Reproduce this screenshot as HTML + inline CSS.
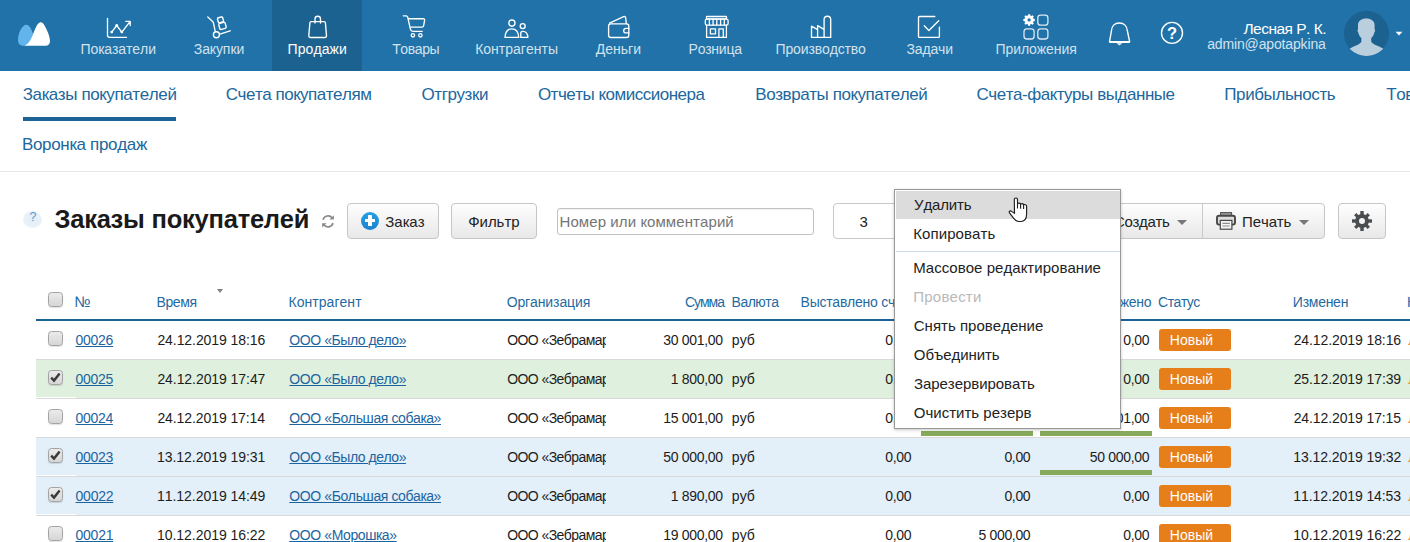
<!DOCTYPE html>
<html lang="ru">
<head>
<meta charset="utf-8">
<title>Заказы покупателей</title>
<style>
*{box-sizing:border-box;margin:0;padding:0}
html,body{width:1410px;height:542px;overflow:hidden;background:#fff}
body{font-family:"Liberation Sans",sans-serif;position:relative}
.a{position:absolute}
.t{position:absolute;white-space:nowrap;font-kerning:none}
.cb{position:absolute;width:15px;height:15px;border:1px solid #a3a3a3;border-radius:3.5px;background:linear-gradient(#ebebeb,#d6d6d6);box-shadow:0 1px 1px rgba(0,0,0,.12)}
.cb svg{position:absolute;left:-1px;top:-1px}
.btn{position:absolute;top:203px;height:36px;border:1px solid #c6c6c6;border-radius:4px;background:linear-gradient(#fefefe,#e8e8e8)}
svg{display:block;overflow:visible}
</style>
</head>
<body>
<div class="a" style="left:0px;top:0px;width:1410px;height:71px;background:#2072a8;"></div>
<div class="a" style="left:272px;top:0px;width:90px;height:71px;background:#1c6291;"></div>
<div class="t" style="left:80.57px;top:38.85px;font-size:14px;line-height:20px;color:#d3e2ee;letter-spacing:-0.083px;">Показатели</div>
<div class="t" style="left:193.74px;top:38.85px;font-size:14px;line-height:20px;color:#d3e2ee;letter-spacing:-0.061px;">Закупки</div>
<div class="t" style="left:287.57px;top:38.85px;font-size:14px;line-height:20px;color:#fff;letter-spacing:0.072px;">Продажи</div>
<div class="t" style="left:392.19px;top:38.85px;font-size:14px;line-height:20px;color:#d3e2ee;letter-spacing:-0.385px;">Товары</div>
<div class="t" style="left:475.15px;top:38.85px;font-size:14px;line-height:20px;color:#d3e2ee;letter-spacing:0.006px;">Контрагенты</div>
<div class="t" style="left:595.70px;top:38.85px;font-size:14px;line-height:20px;color:#d3e2ee;letter-spacing:0.011px;">Деньги</div>
<div class="t" style="left:688.55px;top:38.85px;font-size:14px;line-height:20px;color:#d3e2ee;letter-spacing:-0.242px;">Розница</div>
<div class="t" style="left:775.57px;top:38.85px;font-size:14px;line-height:20px;color:#d3e2ee;letter-spacing:-0.144px;">Производство</div>
<div class="t" style="left:906.54px;top:38.85px;font-size:14px;line-height:20px;color:#d3e2ee;letter-spacing:-0.177px;">Задачи</div>
<div class="t" style="left:995.57px;top:38.85px;font-size:14px;line-height:20px;color:#d3e2ee;letter-spacing:-0.078px;">Приложения</div>
<div class="t" style="left:1243.46px;top:18.63px;font-size:15.5px;line-height:20px;color:#fff;letter-spacing:-0.514px;">Лесная Р. К.</div>
<div class="t" style="left:1207.21px;top:33.85px;font-size:14px;line-height:20px;color:#d3e2ee;letter-spacing:-0.150px;">admin@apotapkina</div>
<svg class="a" style="left:0;top:0" width="1410" height="71" viewBox="0 0 1410 71" fill="none" stroke="#fff" stroke-width="1.35" stroke-linecap="round" stroke-linejoin="round">
<!-- logo -->
<path d="M26.2 24.8C22.3 24.8 18 33 18 40.2C18 44 20.4 45.8 24 45.8L26 45.8C30.5 43 31.5 38 33.2 34.6C31.4 29 29.6 24.8 26.2 24.8Z" fill="#62b5ec" stroke="none"/>
<path d="M24.6 45.8C31.5 43.2 33.2 31.5 37.4 24.6C39 21.6 42 21.2 43.8 24.2C47.2 30 50 36.4 50 41C50 44 48.2 45.8 45.6 45.8Z" fill="#fff" stroke="none"/>
<!-- chart -->
<path d="M107.5 18.3V35.2Q107.5 37.3 109.6 37.3H126.5"/>
<path d="M111.7 32.1L116.7 25.5L121.8 32.1L130 21.6M125.9 21.4H130.2V25.6"/>
<g fill="#fff" stroke="none"><circle cx="111.7" cy="32.1" r="1.4"/><circle cx="116.7" cy="25.5" r="1.4"/><circle cx="121.8" cy="32.1" r="1.4"/></g>
<!-- hand truck -->
<path d="M207.8 17L212.6 21.4Q213.3 22.1 213.5 23.2L215.2 31.3M219.8 34.2L230.2 30.8"/>
<circle cx="216.4" cy="34.7" r="3"/>
<g stroke-width="1.4"><rect x="217.8" y="17.3" width="5.4" height="5.2" rx="1.2" transform="rotate(-15 220.5 19.9)"/><rect x="219.2" y="22.8" width="6.6" height="6.2" rx="1.3" transform="rotate(-15 222.5 25.9)"/></g>
<!-- bag -->
<path d="M311.2 21.6H324.1Q325.3 21.6 325.4 22.8L326.5 35.6Q326.6 37.5 324.8 37.5H310.5Q308.7 37.5 308.8 35.6L309.9 22.8Q310 21.6 311.2 21.6Z"/>
<path d="M315 23V19Q315 16.3 317.75 16.3Q320.5 16.3 320.5 19V23"/>
<!-- cart -->
<path d="M403.3 15.8H406Q407.4 15.8 407.7 17.2L410.4 29.2Q410.9 31.3 413 31.3H422.2"/>
<path d="M408.6 18.7H423.2Q424.9 18.7 424.6 20.3L423.6 25.8Q423.3 27.1 422 27.1H410.4"/>
<circle cx="412.9" cy="35.3" r="1.7" stroke-width="1.3"/><circle cx="420.4" cy="35.3" r="1.7" stroke-width="1.3"/>
<!-- people -->
<circle cx="511.9" cy="23.1" r="3.1"/>
<path d="M505 37.4C505.4 32 508 28.8 511.9 28.8C515.8 28.8 518.4 32 518.8 37.4Z"/>
<circle cx="522.7" cy="26.1" r="2.5"/>
<path d="M520.8 37.4V32.4C521.3 31.6 522 31.3 522.9 31.3C525.6 31.3 527.6 33.6 527.9 37.4Z"/>
<!-- wallet -->
<rect x="608.6" y="23.9" width="20.2" height="13.6" rx="2.2"/>
<path d="M609.6 23.2L623.6 16.7Q625.4 16 625.7 17.8L626.3 23.6"/>
<path d="M628.8 28.4H626Q623.7 28.4 623.7 30.65Q623.7 32.9 626 32.9H628.8"/>
<!-- store -->
<g stroke-width="1.3"><rect x="706.5" y="16.5" width="20" height="2.3" rx="0.4"/>
<rect x="705.3" y="19.2" width="22.8" height="6" rx="1.6"/>
<path d="M709.4 19.5V25M713.1 19.5V25M716.8 19.5V25M720.6 19.5V25M724.3 19.5V25"/>
<path d="M706.6 25.2V37.4H726.4V25.2"/>
<rect x="710.4" y="28.8" width="5.1" height="5.1"/>
<path d="M718.9 37.4V28.8H723.3V37.4"/></g>
<!-- factory -->
<path d="M811.5 37.4V26.2L817.6 29.6M817.6 37.4V25.6L824 29.4M811.5 37.4H830.7V19.5Q830.7 16.2 827.4 16.2Q824.1 16.2 824.1 19.5V37.4"/>
<!-- tasks -->
<path d="M934.8 16.5H919.5Q918.5 16.5 918.5 17.5V36.4Q918.5 37.4 919.5 37.4H938.4Q939.4 37.4 939.4 36.4V27.2"/>
<path d="M924.3 25.7L928.9 30.6L938.7 20.8"/>
<!-- apps -->
<g stroke="#dbe8f2" stroke-width="1.3"><rect x="1037.8" y="15.1" width="10.1" height="10.1" rx="2.8"/><rect x="1024" y="28.9" width="10.1" height="10.1" rx="2.8"/><rect x="1037.8" y="28.9" width="10.1" height="10.1" rx="2.8"/></g>
<g transform="translate(1029.1 20.1)" fill="#fff" stroke="none"><path fill-rule="evenodd" d="M-1.1 -5.7H1.1L1.5 -4.1L2.6 -3.6L4 -4.5L5.5 -3L4.6 -1.6L5.1 -0.5L6.7 -0.1V2.1L5.1 2.5L4.6 3.6L5.5 5L4 6.5L2.6 5.6L1.5 6.1L1.1 7.7H-1.1L-1.5 6.1L-2.6 5.6L-4 6.5L-5.5 5L-4.6 3.6L-5.1 2.5L-6.7 2.1V-0.1L-5.1 -0.5L-4.6 -1.6L-5.5 -3L-4 -4.5L-2.6 -3.6L-1.5 -4.1Z M0 -0.9A1.9 1.9 0 1 0 0 2.9A1.9 1.9 0 1 0 0 -0.9Z" transform="translate(0 -1) scale(0.86)"/></g>
<!-- bell -->
<path d="M1119.3 23C1114.6 23 1111.6 26.4 1111.4 31L1109.5 41.8H1129.7L1127.4 31C1127.1 26.4 1124 23 1119.3 23Z" stroke-width="1.4"/>
<path d="M1110 42.2H1129.2" stroke-width="1.4"/>
<path d="M1116.6 43.2H1122.2L1119.4 45.4Z" fill="#fff" stroke="none"/>
<!-- help -->
<circle cx="1172" cy="32.9" r="10.5" stroke-width="1.4"/>
<!-- avatar -->
<circle cx="1366.5" cy="33.4" r="22.6" fill="#1c6291" stroke="none"/>
<clipPath id="avc"><circle cx="1366.5" cy="33.4" r="22.6"/></clipPath>
<path clip-path="url(#avc)" fill="#b9cfde" stroke="none" d="M1366.2 18.4C1361.5 18.4 1358 20.8 1358 25V29.6C1357.3 29.8 1357.3 31.6 1358.2 32.2C1358.8 35 1360 36.8 1361.4 38.2V41.6C1360.6 44.2 1355 46 1350 48.4L1345 60H1388L1383 48.4C1378 46 1372 44.2 1371.2 41.6V38.2C1372.6 36.8 1373.8 35 1374.4 32.2C1375.3 31.6 1375.3 29.8 1374.6 29.6V25C1374.6 20.8 1371 18.4 1366.2 18.4Z"/>
<path d="M1395.5 31.8H1402.5L1399 35.4Z" fill="#fff" stroke="none"/>
</svg>
<div class="t" style="left:1167.1px;top:22.8px;font-size:16.5px;line-height:20px;font-weight:bold;color:#fff">?</div>

<div class="t" style="left:22.74px;top:85.11px;font-size:17px;line-height:20px;color:#20679d;letter-spacing:-0.387px;">Заказы покупателей</div>
<div class="t" style="left:225.84px;top:85.11px;font-size:17px;line-height:20px;color:#20679d;letter-spacing:-0.489px;">Счета покупателям</div>
<div class="t" style="left:421.49px;top:85.11px;font-size:17px;line-height:20px;color:#20679d;letter-spacing:-0.416px;">Отгрузки</div>
<div class="t" style="left:537.89px;top:85.11px;font-size:17px;line-height:20px;color:#20679d;letter-spacing:-0.485px;">Отчеты комиссионера</div>
<div class="t" style="left:755.31px;top:85.11px;font-size:17px;line-height:20px;color:#20679d;letter-spacing:-0.434px;">Возвраты покупателей</div>
<div class="t" style="left:976.44px;top:85.11px;font-size:17px;line-height:20px;color:#20679d;letter-spacing:-0.453px;">Счета-фактуры выданные</div>
<div class="t" style="left:1224.32px;top:85.11px;font-size:17px;line-height:20px;color:#20679d;letter-spacing:-0.410px;">Прибыльность</div>
<div class="t" style="left:1386.32px;top:85.11px;font-size:17px;line-height:20px;color:#20679d;letter-spacing:0.000px;letter-spacing:-0.4px;">Товары</div>
<div class="t" style="left:21.91px;top:135.11px;font-size:17px;line-height:20px;color:#20679d;letter-spacing:-0.316px;">Воронка продаж</div>
<div class="a" style="left:23px;top:117px;width:153px;height:4px;background:#1c6497;"></div>
<div class="a" style="left:0px;top:171px;width:1410px;height:1px;background:#e6e6e6;"></div>
<div class="t" style="left:54.43px;top:202.86px;font-size:25.5px;line-height:32px;color:#1a1a1a;letter-spacing:-0.225px;font-weight:bold;">Заказы покупателей</div>
<!-- help small -->
<div class="a" style="left:23px;top:210.5px;width:19px;height:17px;border-radius:50%;background:radial-gradient(ellipse at center,#e3eef8 0%,#e8f1f9 60%,#f3f8fc 100%)"></div>
<div class="t" style="left:29.4px;top:207.4px;font-size:12.5px;line-height:20px;color:#5f9acb">?</div>
<!-- refresh -->
<svg class="a" style="left:320px;top:213px" width="16" height="17" viewBox="320 213 16 17" fill="none" stroke="#8a8a8a" stroke-width="1.7">
<path d="M323 219.8A5.2 5.2 0 0 1 332.2 218"/><path d="M333 223A5.2 5.2 0 0 1 323.8 224.8"/>
<path d="M333.9 215.2V219.6H329.5Z" fill="#8a8a8a" stroke="none"/><path d="M322.1 227.6V223.2H326.5Z" fill="#8a8a8a" stroke="none"/>
</svg>
<!-- buttons -->
<div class="btn" style="left:347px;width:92px"></div>
<div class="a" style="left:361px;top:211.5px;width:18px;height:18px;border-radius:50%;background:linear-gradient(#27a0e2,#1b82cf)"></div>
<div class="a" style="left:364.8px;top:218.8px;width:10.4px;height:3.4px;background:#fff;border-radius:.5px"></div>
<div class="a" style="left:368.3px;top:215.4px;width:3.4px;height:10.2px;background:#fff;border-radius:.5px"></div>
<div class="btn" style="left:451px;width:86px"></div>
<div class="a" style="left:557px;top:208px;width:257px;height:27px;border:1px solid #c2c2c2;border-radius:3px;background:#fff;box-shadow:inset 0 1px 1px rgba(0,0,0,.06)"></div>
<div class="a" style="left:833px;top:203px;width:120px;height:36px;border:1px solid #c9c9c9;border-radius:4px;background:#fff"></div>
<div class="btn" style="left:1040px;width:285px"></div>
<div class="a" style="left:1202px;top:204px;width:1px;height:34px;background:#c9c9c9"></div>
<div class="btn" style="left:1338px;width:48px"></div>
<!-- carets -->
<div class="a" style="left:1177px;top:220px;width:0;height:0;border-left:5px solid transparent;border-right:5px solid transparent;border-top:5px solid #777"></div>
<div class="a" style="left:1298.8px;top:220px;width:0;height:0;border-left:5px solid transparent;border-right:5px solid transparent;border-top:5px solid #777"></div>
<!-- printer -->
<svg class="a" style="left:1215px;top:211px" width="22" height="20" viewBox="1215 211 22 20">
<rect x="1220.6" y="212.6" width="11" height="3.4" fill="#9b9b9b" stroke="#4a4a4a" stroke-width="1"/>
<rect x="1217" y="215.8" width="18" height="8.8" rx="2" fill="#dcdcdc" stroke="#474747" stroke-width="1.9"/>
<rect x="1220.3" y="220.4" width="11.6" height="8.8" fill="#f4f4f4" stroke="#474747" stroke-width="1.2"/>
<path d="M1222.4 223.4H1229.8M1222.4 226H1229.8" stroke="#8d8d8d" stroke-width="1.2"/>
</svg>
<!-- gear -->
<svg class="a" style="left:1351px;top:210px" width="22" height="22" viewBox="-11 -11 22 22">
<g fill="#4a4d50"><circle r="6.9"/>
<rect x="-1.7" y="-10" width="3.4" height="20"/><rect x="-10" y="-1.7" width="20" height="3.4"/>
<rect x="-1.6" y="-9.6" width="3.2" height="19.2" transform="rotate(45)"/><rect x="-1.6" y="-9.6" width="3.2" height="19.2" transform="rotate(-45)"/></g>
<circle r="3" fill="#f3f3f3"/>
</svg>

<div class="t" style="left:385.21px;top:211.50px;font-size:15px;line-height:20px;color:#222;letter-spacing:0.043px;">Заказ</div>
<div class="t" style="left:468.14px;top:211.50px;font-size:15px;line-height:20px;color:#222;letter-spacing:-0.014px;">Фильтр</div>
<div class="t" style="left:559.47px;top:211.50px;font-size:15px;line-height:20px;color:#757575;letter-spacing:0.089px;">Номер или комментарий</div>
<div class="t" style="left:859.43px;top:211.50px;font-size:15px;line-height:20px;color:#222;letter-spacing:0.000px;">3</div>
<div class="t" style="left:1113.88px;top:211.50px;font-size:15px;line-height:20px;color:#222;letter-spacing:-0.300px;">Создать</div>
<div class="t" style="left:1242.08px;top:211.50px;font-size:15px;line-height:20px;color:#222;letter-spacing:-0.127px;">Печать</div>
<div class="t" style="left:74.50px;top:292.03px;font-size:15.2px;line-height:20px;color:#1f6aa0;letter-spacing:0.000px;">№</div>
<div class="t" style="left:156.55px;top:291.75px;font-size:14px;line-height:20px;color:#1f6aa0;letter-spacing:-0.424px;">Время</div>
<div class="t" style="left:288.55px;top:291.75px;font-size:14px;line-height:20px;color:#1f6aa0;letter-spacing:0.033px;">Контрагент</div>
<div class="t" style="left:506.64px;top:291.75px;font-size:14px;line-height:20px;color:#1f6aa0;letter-spacing:-0.111px;">Организация</div>
<div class="t" style="left:684.99px;top:291.75px;font-size:14px;line-height:20px;color:#1f6aa0;letter-spacing:-1.034px;">Сумма</div>
<div class="t" style="left:731.55px;top:291.75px;font-size:14px;line-height:20px;color:#1f6aa0;letter-spacing:-0.509px;">Валюта</div>
<div class="t" style="left:1157.99px;top:291.75px;font-size:14px;line-height:20px;color:#1f6aa0;letter-spacing:-0.468px;">Статус</div>
<div class="t" style="left:1292.85px;top:291.75px;font-size:14px;line-height:20px;color:#1f6aa0;letter-spacing:-0.270px;">Изменен</div>
<div class="t" style="left:800.55px;top:291.75px;font-size:14px;line-height:20px;color:#1f6aa0;letter-spacing:0.000px;letter-spacing:-0.25px;">Выставлено счетов</div>
<div class="t" style="left:1083.72px;top:291.75px;font-size:14px;line-height:20px;color:#1f6aa0;letter-spacing:-0.250px;">Отгружено</div>
<div class="t" style="left:1407.05px;top:291.75px;font-size:14px;line-height:20px;color:#1f6aa0;letter-spacing:0.000px;">К</div>
<div class="a" style="left:217px;top:289px;width:0;height:0;border-left:3.5px solid transparent;border-right:3.5px solid transparent;border-top:4px solid #808080"></div>
<div class="a" style="left:36px;top:319px;width:1374px;height:2px;background:#1b6394;"></div>
<div class="a" style="left:36px;top:359px;width:1374px;height:1px;background:#d9d9d9;"></div>
<div class="cb" style="left:48px;top:331px"></div>
<div class="t" style="left:75.55px;top:329.85px;font-size:14px;line-height:20px;color:#1c64a0;letter-spacing:-0.267px;text-decoration:underline;text-underline-offset:1px;text-decoration-thickness:1px;">00026</div>
<div class="t" style="left:157.40px;top:329.85px;font-size:14px;line-height:20px;color:#1c1c1c;letter-spacing:-0.072px;">24.12.2019 18:16</div>
<div class="t" style="left:289.34px;top:329.85px;font-size:14px;line-height:20px;color:#1c64a0;letter-spacing:-0.429px;text-decoration:underline;text-underline-offset:1px;text-decoration-thickness:1px;">ООО «Было дело»</div>
<div class="t" style="left:507.14px;top:329.85px;font-size:14px;line-height:20px;color:#1c1c1c;letter-spacing:0.000px;width:98.86px;overflow:hidden;letter-spacing:-0.557px;">ООО «Зебрамарк»</div>
<div class="t" style="left:663.30px;top:329.85px;font-size:14px;line-height:20px;color:#1c1c1c;letter-spacing:-0.330px;">30 001,00</div>
<div class="t" style="left:731.80px;top:329.85px;font-size:14px;line-height:20px;color:#1c1c1c;letter-spacing:0.143px;">руб</div>
<div class="t" style="left:885.29px;top:329.85px;font-size:14px;line-height:20px;color:#1c1c1c;letter-spacing:-0.330px;">0,00</div>
<div class="t" style="left:1004.39px;top:329.85px;font-size:14px;line-height:20px;color:#1c1c1c;letter-spacing:-0.330px;">0,00</div>
<div class="t" style="left:1123.19px;top:329.85px;font-size:14px;line-height:20px;color:#1c1c1c;letter-spacing:-0.330px;">0,00</div>
<div class="a" style="left:1159px;top:329px;width:72px;height:22px;background:#e67e19;border-radius:3px;"></div>
<div class="t" style="left:1169.85px;top:329.85px;font-size:14px;line-height:20px;color:#fff;letter-spacing:0.001px;">Новый</div>
<div class="t" style="left:1293.70px;top:329.85px;font-size:14px;line-height:20px;color:#1c1c1c;letter-spacing:-0.105px;">24.12.2019 18:16</div>
<div class="t" style="left:1407.88px;top:329.85px;font-size:14px;line-height:20px;color:#e8962e;letter-spacing:0.000px;">Л</div>
<div class="a" style="left:36px;top:360px;width:1374px;height:38px;background:#dff1de;"></div>
<div class="a" style="left:36px;top:398px;width:1374px;height:1px;background:#d9d9d9;"></div>
<div class="a" style="left:36px;top:397px;width:40px;height:1px;background:#fff;"></div>
<div class="cb" style="left:48px;top:370px"><svg width="15" height="15" viewBox="0 0 15 15"><path d="M3.2 7.6 L6 10.6 L11.6 3.4" fill="none" stroke="#3a3a3a" stroke-width="2.4"/></svg></div>
<div class="t" style="left:75.55px;top:368.85px;font-size:14px;line-height:20px;color:#1c64a0;letter-spacing:-0.274px;text-decoration:underline;text-underline-offset:1px;text-decoration-thickness:1px;">00025</div>
<div class="t" style="left:157.40px;top:368.85px;font-size:14px;line-height:20px;color:#1c1c1c;letter-spacing:-0.066px;">24.12.2019 17:47</div>
<div class="t" style="left:289.34px;top:368.85px;font-size:14px;line-height:20px;color:#1c64a0;letter-spacing:-0.429px;text-decoration:underline;text-underline-offset:1px;text-decoration-thickness:1px;">ООО «Было дело»</div>
<div class="t" style="left:507.14px;top:368.85px;font-size:14px;line-height:20px;color:#1c1c1c;letter-spacing:0.000px;width:98.86px;overflow:hidden;letter-spacing:-0.557px;">ООО «Зебрамарк»</div>
<div class="t" style="left:670.76px;top:368.85px;font-size:14px;line-height:20px;color:#1c1c1c;letter-spacing:-0.330px;">1 800,00</div>
<div class="t" style="left:731.80px;top:368.85px;font-size:14px;line-height:20px;color:#1c1c1c;letter-spacing:0.143px;">руб</div>
<div class="t" style="left:885.29px;top:368.85px;font-size:14px;line-height:20px;color:#1c1c1c;letter-spacing:-0.330px;">0,00</div>
<div class="t" style="left:1004.39px;top:368.85px;font-size:14px;line-height:20px;color:#1c1c1c;letter-spacing:-0.330px;">0,00</div>
<div class="t" style="left:1123.19px;top:368.85px;font-size:14px;line-height:20px;color:#1c1c1c;letter-spacing:-0.330px;">0,00</div>
<div class="a" style="left:1159px;top:368px;width:72px;height:22px;background:#e67e19;border-radius:3px;"></div>
<div class="t" style="left:1169.85px;top:368.85px;font-size:14px;line-height:20px;color:#fff;letter-spacing:0.001px;">Новый</div>
<div class="t" style="left:1293.70px;top:368.85px;font-size:14px;line-height:20px;color:#1c1c1c;letter-spacing:-0.102px;">25.12.2019 17:39</div>
<div class="t" style="left:1407.88px;top:368.85px;font-size:14px;line-height:20px;color:#e8962e;letter-spacing:0.000px;">Л</div>
<div class="a" style="left:36px;top:437px;width:1374px;height:1px;background:#d9d9d9;"></div>
<div class="cb" style="left:48px;top:409px"></div>
<div class="t" style="left:75.55px;top:407.85px;font-size:14px;line-height:20px;color:#1c64a0;letter-spacing:-0.318px;text-decoration:underline;text-underline-offset:1px;text-decoration-thickness:1px;">00024</div>
<div class="t" style="left:157.40px;top:407.85px;font-size:14px;line-height:20px;color:#1c1c1c;letter-spacing:-0.085px;">24.12.2019 17:14</div>
<div class="t" style="left:289.34px;top:407.85px;font-size:14px;line-height:20px;color:#1c64a0;letter-spacing:-0.396px;text-decoration:underline;text-underline-offset:1px;text-decoration-thickness:1px;">ООО «Большая собака»</div>
<div class="t" style="left:507.14px;top:407.85px;font-size:14px;line-height:20px;color:#1c1c1c;letter-spacing:0.000px;width:98.86px;overflow:hidden;letter-spacing:-0.557px;">ООО «Зебрамарк»</div>
<div class="t" style="left:663.30px;top:407.85px;font-size:14px;line-height:20px;color:#1c1c1c;letter-spacing:-0.330px;">15 001,00</div>
<div class="t" style="left:731.80px;top:407.85px;font-size:14px;line-height:20px;color:#1c1c1c;letter-spacing:0.143px;">руб</div>
<div class="t" style="left:885.29px;top:407.85px;font-size:14px;line-height:20px;color:#1c1c1c;letter-spacing:-0.330px;">0,00</div>
<div class="t" style="left:971.00px;top:407.85px;font-size:14px;line-height:20px;color:#1c1c1c;letter-spacing:-0.330px;">15 001,00</div>
<div class="t" style="left:1089.80px;top:407.85px;font-size:14px;line-height:20px;color:#1c1c1c;letter-spacing:-0.330px;">15 001,00</div>
<div class="a" style="left:1159px;top:407px;width:72px;height:22px;background:#e67e19;border-radius:3px;"></div>
<div class="t" style="left:1169.85px;top:407.85px;font-size:14px;line-height:20px;color:#fff;letter-spacing:0.001px;">Новый</div>
<div class="t" style="left:1293.70px;top:407.85px;font-size:14px;line-height:20px;color:#1c1c1c;letter-spacing:-0.107px;">24.12.2019 17:15</div>
<div class="t" style="left:1407.88px;top:407.85px;font-size:14px;line-height:20px;color:#e8962e;letter-spacing:0.000px;">Л</div>
<div class="a" style="left:36px;top:438px;width:1374px;height:38px;background:#e3eff9;"></div>
<div class="a" style="left:36px;top:476px;width:1374px;height:1px;background:#d9d9d9;"></div>
<div class="a" style="left:36px;top:475px;width:40px;height:1px;background:#fff;"></div>
<div class="cb" style="left:48px;top:448px"><svg width="15" height="15" viewBox="0 0 15 15"><path d="M3.2 7.6 L6 10.6 L11.6 3.4" fill="none" stroke="#3a3a3a" stroke-width="2.4"/></svg></div>
<div class="t" style="left:75.55px;top:446.85px;font-size:14px;line-height:20px;color:#1c64a0;letter-spacing:-0.267px;text-decoration:underline;text-underline-offset:1px;text-decoration-thickness:1px;">00023</div>
<div class="t" style="left:157.03px;top:446.85px;font-size:14px;line-height:20px;color:#1c1c1c;letter-spacing:-0.043px;">13.12.2019 19:31</div>
<div class="t" style="left:289.34px;top:446.85px;font-size:14px;line-height:20px;color:#1c64a0;letter-spacing:-0.429px;text-decoration:underline;text-underline-offset:1px;text-decoration-thickness:1px;">ООО «Было дело»</div>
<div class="t" style="left:507.14px;top:446.85px;font-size:14px;line-height:20px;color:#1c1c1c;letter-spacing:0.000px;width:98.86px;overflow:hidden;letter-spacing:-0.557px;">ООО «Зебрамарк»</div>
<div class="t" style="left:663.30px;top:446.85px;font-size:14px;line-height:20px;color:#1c1c1c;letter-spacing:-0.330px;">50 000,00</div>
<div class="t" style="left:731.80px;top:446.85px;font-size:14px;line-height:20px;color:#1c1c1c;letter-spacing:0.143px;">руб</div>
<div class="t" style="left:885.29px;top:446.85px;font-size:14px;line-height:20px;color:#1c1c1c;letter-spacing:-0.330px;">0,00</div>
<div class="t" style="left:1004.39px;top:446.85px;font-size:14px;line-height:20px;color:#1c1c1c;letter-spacing:-0.330px;">0,00</div>
<div class="t" style="left:1089.80px;top:446.85px;font-size:14px;line-height:20px;color:#1c1c1c;letter-spacing:-0.330px;">50 000,00</div>
<div class="a" style="left:1159px;top:446px;width:72px;height:22px;background:#e67e19;border-radius:3px;"></div>
<div class="t" style="left:1169.85px;top:446.85px;font-size:14px;line-height:20px;color:#fff;letter-spacing:0.001px;">Новый</div>
<div class="t" style="left:1293.33px;top:446.85px;font-size:14px;line-height:20px;color:#1c1c1c;letter-spacing:-0.075px;">13.12.2019 19:32</div>
<div class="t" style="left:1407.88px;top:446.85px;font-size:14px;line-height:20px;color:#e8962e;letter-spacing:0.000px;">Л</div>
<div class="a" style="left:36px;top:477px;width:1374px;height:38px;background:#e3eff9;"></div>
<div class="a" style="left:36px;top:515px;width:1374px;height:1px;background:#d9d9d9;"></div>
<div class="a" style="left:36px;top:514px;width:40px;height:1px;background:#fff;"></div>
<div class="cb" style="left:48px;top:487px"><svg width="15" height="15" viewBox="0 0 15 15"><path d="M3.2 7.6 L6 10.6 L11.6 3.4" fill="none" stroke="#3a3a3a" stroke-width="2.4"/></svg></div>
<div class="t" style="left:75.55px;top:485.85px;font-size:14px;line-height:20px;color:#1c64a0;letter-spacing:-0.245px;text-decoration:underline;text-underline-offset:1px;text-decoration-thickness:1px;">00022</div>
<div class="t" style="left:157.03px;top:485.85px;font-size:14px;line-height:20px;color:#1c1c1c;letter-spacing:-0.044px;">11.12.2019 14:49</div>
<div class="t" style="left:289.34px;top:485.85px;font-size:14px;line-height:20px;color:#1c64a0;letter-spacing:-0.396px;text-decoration:underline;text-underline-offset:1px;text-decoration-thickness:1px;">ООО «Большая собака»</div>
<div class="t" style="left:507.14px;top:485.85px;font-size:14px;line-height:20px;color:#1c1c1c;letter-spacing:0.000px;width:98.86px;overflow:hidden;letter-spacing:-0.557px;">ООО «Зебрамарк»</div>
<div class="t" style="left:670.76px;top:485.85px;font-size:14px;line-height:20px;color:#1c1c1c;letter-spacing:-0.330px;">1 890,00</div>
<div class="t" style="left:731.80px;top:485.85px;font-size:14px;line-height:20px;color:#1c1c1c;letter-spacing:0.143px;">руб</div>
<div class="t" style="left:885.29px;top:485.85px;font-size:14px;line-height:20px;color:#1c1c1c;letter-spacing:-0.330px;">0,00</div>
<div class="t" style="left:1004.39px;top:485.85px;font-size:14px;line-height:20px;color:#1c1c1c;letter-spacing:-0.330px;">0,00</div>
<div class="t" style="left:1123.19px;top:485.85px;font-size:14px;line-height:20px;color:#1c1c1c;letter-spacing:-0.330px;">0,00</div>
<div class="a" style="left:1159px;top:485px;width:72px;height:22px;background:#e67e19;border-radius:3px;"></div>
<div class="t" style="left:1169.85px;top:485.85px;font-size:14px;line-height:20px;color:#fff;letter-spacing:0.001px;">Новый</div>
<div class="t" style="left:1293.33px;top:485.85px;font-size:14px;line-height:20px;color:#1c1c1c;letter-spacing:-0.081px;">11.12.2019 14:53</div>
<div class="t" style="left:1407.88px;top:485.85px;font-size:14px;line-height:20px;color:#e8962e;letter-spacing:0.000px;">Л</div>
<div class="a" style="left:36px;top:554px;width:1374px;height:1px;background:#d9d9d9;"></div>
<div class="cb" style="left:48px;top:526px"></div>
<div class="t" style="left:75.55px;top:524.85px;font-size:14px;line-height:20px;color:#1c64a0;letter-spacing:-0.250px;text-decoration:underline;text-underline-offset:1px;text-decoration-thickness:1px;">00021</div>
<div class="t" style="left:157.03px;top:524.85px;font-size:14px;line-height:20px;color:#1c1c1c;letter-spacing:-0.041px;">10.12.2019 16:22</div>
<div class="t" style="left:289.34px;top:524.85px;font-size:14px;line-height:20px;color:#1c64a0;letter-spacing:-0.380px;text-decoration:underline;text-underline-offset:1px;text-decoration-thickness:1px;">ООО «Морошка»</div>
<div class="t" style="left:507.14px;top:524.85px;font-size:14px;line-height:20px;color:#1c1c1c;letter-spacing:0.000px;width:98.86px;overflow:hidden;letter-spacing:-0.557px;">ООО «Зебрамарк»</div>
<div class="t" style="left:663.30px;top:524.85px;font-size:14px;line-height:20px;color:#1c1c1c;letter-spacing:-0.330px;">19 000,00</div>
<div class="t" style="left:731.80px;top:524.85px;font-size:14px;line-height:20px;color:#1c1c1c;letter-spacing:0.143px;">руб</div>
<div class="t" style="left:885.29px;top:524.85px;font-size:14px;line-height:20px;color:#1c1c1c;letter-spacing:-0.330px;">0,00</div>
<div class="t" style="left:978.46px;top:524.85px;font-size:14px;line-height:20px;color:#1c1c1c;letter-spacing:-0.330px;">5 000,00</div>
<div class="t" style="left:1123.19px;top:524.85px;font-size:14px;line-height:20px;color:#1c1c1c;letter-spacing:-0.330px;">0,00</div>
<div class="a" style="left:1159px;top:524px;width:72px;height:22px;background:#e67e19;border-radius:3px;"></div>
<div class="t" style="left:1169.85px;top:524.85px;font-size:14px;line-height:20px;color:#fff;letter-spacing:0.001px;">Новый</div>
<div class="t" style="left:1293.33px;top:524.85px;font-size:14px;line-height:20px;color:#1c1c1c;letter-spacing:-0.075px;">10.12.2019 16:22</div>
<div class="t" style="left:1407.88px;top:524.85px;font-size:14px;line-height:20px;color:#e8962e;letter-spacing:0.000px;">Л</div>
<div class="cb" style="left:48px;top:292px"></div>
<div class="a" style="left:921px;top:431px;width:112px;height:5px;background:#86a95c;"></div>
<div class="a" style="left:1040px;top:431px;width:112px;height:5px;background:#86a95c;"></div>
<div class="a" style="left:1040px;top:470px;width:112px;height:5px;background:#86a95c;"></div>
<div class="a" style="left:894px;top:189px;width:227px;height:240px;background:#fff;border:1px solid #999;box-shadow:0 1px 3px rgba(0,0,0,.22)"></div>
<div class="a" style="left:896px;top:191px;width:224px;height:28px;background:#dcdcdc"></div>
<div class="a" style="left:896px;top:251px;width:224px;height:1px;background:#d3dcef"></div>

<div class="t" style="left:914.10px;top:194.80px;font-size:15px;line-height:20px;color:#222;letter-spacing:-0.170px;">Удалить</div>
<div class="t" style="left:913.27px;top:223.60px;font-size:15px;line-height:20px;color:#222;letter-spacing:0.087px;">Копировать</div>
<div class="t" style="left:913.27px;top:257.80px;font-size:15px;line-height:20px;color:#222;letter-spacing:0.050px;">Массовое редактирование</div>
<div class="t" style="left:913.28px;top:286.60px;font-size:15px;line-height:20px;color:#b8b8b8;letter-spacing:0.219px;">Провести</div>
<div class="t" style="left:913.74px;top:315.50px;font-size:15px;line-height:20px;color:#222;letter-spacing:0.021px;">Снять проведение</div>
<div class="t" style="left:913.79px;top:344.50px;font-size:15px;line-height:20px;color:#222;letter-spacing:-0.070px;">Объединить</div>
<div class="t" style="left:914.01px;top:373.80px;font-size:15px;line-height:20px;color:#222;letter-spacing:-0.055px;">Зарезервировать</div>
<div class="t" style="left:913.79px;top:402.60px;font-size:15px;line-height:20px;color:#222;letter-spacing:0.006px;">Очистить резерв</div>
<svg class="a" style="left:1006px;top:195px" width="26" height="30" viewBox="1006 195 26 30">
<path d="M1014.3 199.6a1.6 1.6 0 0 1 3.2 0V203.5c1.1-.5 2.600-.3 3.100.5 1-.5 2.500-.3 3 .6 1.200-.4 3 .1 3 1.500V214c0 4.400-2.200 7.500-6 7.500h-1.700c-2.400 0-3.900-1.400-5.400-3.400l-4-5.200c-.8-1.300.5-2.500 1.700-1.800l3.300 2.300z" fill="#fff" stroke="#1d1d1d" stroke-width="1.15" stroke-linejoin="round"/>
<path d="M1017.5 203.500v5M1020.600 204v4.700M1023.600 204.600v4.300" stroke="#1d1d1d" stroke-width="1.1" fill="none"/>
</svg>

</body>
</html>
